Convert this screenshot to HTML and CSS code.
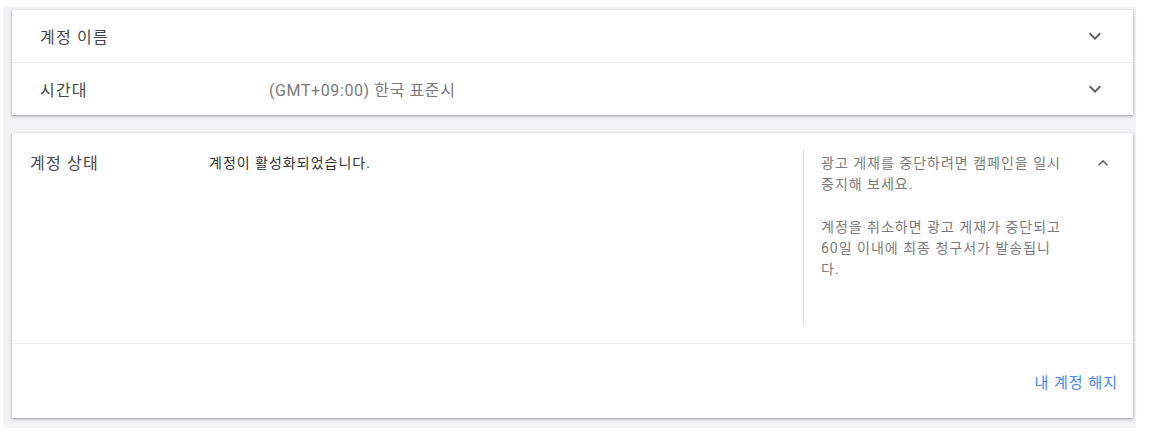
FILE: index.html
```html
<!DOCTYPE html>
<html lang="ko">
<head>
<meta charset="utf-8">
<link rel="stylesheet" href="styles.css">
</head>
<body>
<div class="page">
  <section class="card">
    <div class="row">
      <div class="row-label">계정 이름</div>
      <div class="row-value"></div>
      <svg class="chev" viewBox="0 0 24 24" width="24" height="24"><path d="M16.59 8.59L12 13.17 7.41 8.59 6 10l6 6 6-6z"/></svg>
    </div>
    <div class="row row-divided">
      <div class="row-label">시간대</div>
      <div class="row-value">(GMT+09:00) 한국 표준시</div>
      <svg class="chev" viewBox="0 0 24 24" width="24" height="24"><path d="M16.59 8.59L12 13.17 7.41 8.59 6 10l6 6 6-6z"/></svg>
    </div>
  </section>

  <section class="card status-card">
    <div class="status-main">
      <div class="status-label">계정 상태</div>
      <div class="status-text">계정이 활성화되었습니다.</div>
      <div class="status-side">
        <p>광고 게재를 중단하려면 캠페인을 일시 중지해 보세요.</p>
        <p>계정을 취소하면 광고 게재가 중단되고<br>60일 이내에 최종 청구서가 발송됩니<br>다.</p>
      </div>
      <svg class="chev-up" viewBox="0 0 24 24" width="20" height="20"><path d="M12 8l-6 6 1.41 1.41L12 10.83l4.59 4.58L18 14z"/></svg>
    </div>
    <div class="status-footer">
      <a class="cancel-link" href="#">내 계정 해지</a>
    </div>
  </section>
</div>
</body>
</html>
```

FILE: styles.css
```css
html, body {
  margin: 0;
  padding: 0;
  background: #ffffff;
}

body {
  font-family: Roboto, "Noto Sans CJK KR", sans-serif;
  color: #202124;
}

.page {
  margin: 7px 13px 8px 3px;
  padding: 3px 3px 10px 9px;
  background: #f1f3f4;
  display: flex;
  flex-direction: column;
  gap: 18px;
}

.card {
  background: #ffffff;
  box-shadow: 0 1px 2px rgba(60, 64, 67, 0.3), 0 1px 3px 1px rgba(60, 64, 67, 0.15);
}

.row {
  height: 52px;
  display: flex;
  align-items: center;
  padding: 0 26px 0 28px;
}

.row-divided {
  border-top: 1px solid #ebebeb;
}

.row-label {
  width: 229px;
  font-size: 16px;
  letter-spacing: 1.2px;
  color: #444746;
}

.row-value {
  flex: 1;
  font-size: 16px;
  letter-spacing: 0.6px;
  color: #7a7a7a;
}

.chev, .chev-up {
  fill: #5f6368;
  flex: none;
}

.status-main {
  display: flex;
  align-items: flex-start;
  padding: 17px 20px 18px 18px;
}

.status-label {
  width: 179px;
  margin-top: 3px;
  font-size: 16px;
  line-height: 21px;
  letter-spacing: 1.2px;
  color: #444746;
}

.status-text {
  flex: 1;
  margin-top: 3px;
  font-size: 14px;
  line-height: 21px;
  letter-spacing: 1px;
  color: #303134;
}

.status-side {
  width: 263px;
  height: 175px;
  box-sizing: border-box;
  padding: 3px 0 0 17px;
  border-left: 1px solid #e0e0e0;
  font-size: 14px;
  line-height: 21px;
  letter-spacing: 1px;
  color: #7a7a7a;
}

.status-side p {
  margin: 0 0 22px 0;
}

.chev-up {
  margin: 3px 0 0 27px;
}

.status-footer {
  border-top: 1px solid #ebebeb;
  display: flex;
  justify-content: flex-end;
  padding: 29px 15px 25px 0;
}

.cancel-link {
  font-size: 15px;
  line-height: 20px;
  letter-spacing: 1px;
  color: #4285f4;
  text-decoration: none;
}
```
